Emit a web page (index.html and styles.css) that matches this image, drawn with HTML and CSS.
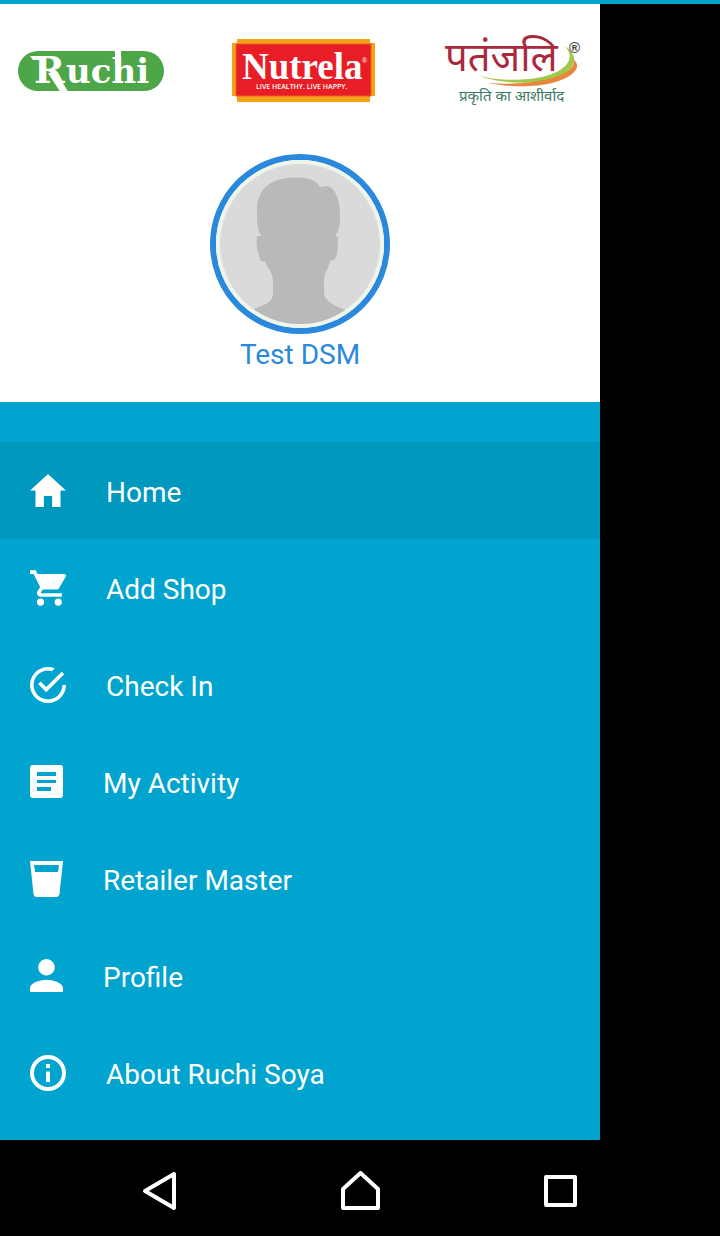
FILE: index.html
```html
<!DOCTYPE html>
<html lang="en">
<head>
<meta charset="utf-8">
<meta name="viewport" content="width=device-width, initial-scale=1">
<title>Ruchi Soya</title>
<link rel="stylesheet" href="styles.css">
</head>
<body>
<div class="screen">
  <aside class="drawer">
    <header class="profile">
      <div class="brands">
        <svg class="brand" width="146" height="70" viewBox="0 0 146 70" role="img" aria-label="Ruchi">
          <rect class="ruchi-pill" x="0" y="15" width="146" height="40" rx="20"/>
          <path class="ruchi-cut" d="M12 20h12v4H15zM30 37h9l11 18.500h-8zM97 14h6v14h-6z"/>
          <text class="ruchi-initial" x="16" y="47">R</text>
          <text class="ruchi-rest" x="48" y="47">uchi</text>
        </svg>
        <svg class="brand" width="144" height="70" viewBox="0 0 144 70" role="img" aria-label="Nutrela">
          <path class="nutrela-frame" d="M5 3h133v4h5v53h-5v6H5v-6H0V7h5z"/>
          <rect class="nutrela-panel" x="4" y="8" width="135" height="52"/>
          <text class="nutrela-name" x="10" y="43">Nutrela</text>
          <text class="nutrela-reg" x="130" y="27">®</text>
          <text class="nutrela-tag" x="24" y="53">LIVE HEALTHY. LIVE HAPPY.</text>
        </svg>
        <svg class="brand" width="138" height="70" viewBox="0 0 138 70" role="img" aria-label="Patanjali">
          <path class="swoosh-green" d="M36 40C64 47 108 45 122 29c6-7 4-13-1-19 9 6 12 14 6 22C113 50 62 50 36 40z"/>
          <path class="swoosh-orange" d="M44 47c34 3 74-3 84-16 3-4 2-7-1-9 6 3 8 8 4 13-12 15-54 19-87 12z"/>
          <text class="patanjali-name" x="1" y="35">पतंजलि</text>
          <text class="patanjali-reg" x="125" y="17">®</text>
          <text class="patanjali-tag" x="15" y="65">प्रकृति का आशीर्वाद</text>
        </svg>
      </div>
      <svg class="avatar" viewBox="0 0 180 180" role="img" aria-label="Profile picture">
        <defs><clipPath id="face"><circle cx="90" cy="90" r="80"/></clipPath></defs>
        <circle class="avatar-ring" cx="90" cy="90" r="87"/>
        <circle class="avatar-back" cx="90" cy="90" r="82"/>
        <path class="avatar-person" clip-path="url(#face)" d="M51 82C48 76 47 71 47 64V53C48 34 63 23 86 23.500c11 0 20 2 24 9.500 4-1 8-1 10 0 8 5 10 18 10 29 0 7 0 13-5 20 2 0 3 1 3 3 0 9 0 16-4 21l-4 1c-1 8-6 11-6 19v12c0 10 12 14 22 18v30H44v-31c9-4 19-5 19-17v-11c0-9-6-13-8-20-3 1-5 1-5-3-3-7-4-15-3-22z"/>
      </svg>
      <p class="user-name">Test DSM</p>
    </header>
    <nav class="menu">
      <a class="item active" href="#home" aria-current="page">
        <svg class="icon" width="36" height="33" viewBox="48 64 416 384"><path d="M208 448V320h96v128h97.600V256H464L256 64 48 256h62.400v192z"/></svg>
        <span class="label">Home</span>
      </a>
      <a class="item" href="#add-shop">
        <svg class="icon" width="36" height="36" viewBox="48 48 416 416"><path d="M169.600 377.600a41.600 41.600 0 1 0 0 83.200 41.600 41.600 0 1 0 0-83.200zM48 51.200v41.600h41.600l74.900 151.700-31.300 50.900c-3.100 5.200-5.200 12.500-5.200 19.800 0 27.900 19 41.600 44.800 41.600H416v-40H177.900c-3.100 0-5.200-2.100-5.200-5.200 0-1 2.200-5.200 2.200-5.200l20.800-32.800h154.900c15.600 0 29.100-8.300 36.400-21.800l74.900-128.800c1.200-2.500 2.100-6.200 2.100-10.400 0-11.400-9.400-19.800-20.800-19.800H135.400L115.600 51.200zM374.400 377.600a41.600 41.600 0 1 0 0 83.200 41.600 41.600 0 1 0 0-83.200z"/></svg>
        <span class="label">Add Shop</span>
      </a>
      <a class="item" href="#check-in">
        <svg class="icon" width="36" height="36" viewBox="48 48 416 416"><path d="M170.700 216.500l-29.100 29.100 93.600 93.600 208-208-29.100-29.100L235.200 279.900zM422.400 256c0 91.500-74.900 166.400-166.400 166.400S89.600 347.500 89.600 256 164.500 89.600 256 89.600c15.600 0 31.200 2.100 45.800 6.200L334 62.400C310.100 53 284.100 48 256 48 141.600 48 48 141.600 48 256s93.600 208 208 208 208-93.600 208-208z"/></svg>
        <span class="label">Check In</span>
      </a>
      <a class="item" href="#my-activity">
        <svg class="icon" width="33" height="33" viewBox="0 0 33 33"><path fill-rule="evenodd" d="M3 0h27a3 3 0 0 1 3 3v27a3 3 0 0 1-3 3H3a3 3 0 0 1-3-3V3a3 3 0 0 1 3-3zM7 7v4h19V7zM7 15v3h19v-3zM7 22v4h14v-4z"/></svg>
        <span class="label">My Activity</span>
      </a>
      <a class="item" href="#retailer-master">
        <svg class="icon" width="33" height="36" viewBox="0 0 33 36"><path fill-rule="evenodd" d="M0 0h33l-3.500 33q-.4 3-3.500 3H7q-3.100 0-3.500-3zM4 4l1 7h23l1-7z"/></svg>
        <span class="label">Retailer Master</span>
      </a>
      <a class="item" href="#profile">
        <svg class="icon" width="33" height="33" viewBox="64 64 384 384"><path d="M256 256c52.800 0 96-43.200 96-96s-43.200-96-96-96-96 43.200-96 96 43.200 96 96 96zm0 48c-63.600 0-192 32.400-192 96v48h384v-48c0-63.600-128.400-96-192-96z"/></svg>
        <span class="label">Profile</span>
      </a>
      <a class="item" href="#about">
        <svg class="icon" width="36" height="36" viewBox="0 0 36 36"><circle class="info-ring" cx="18" cy="18" r="16"/><path d="M16 9h4v4h-4zM16 16.500h4V27h-4z"/></svg>
        <span class="label">About Ruchi Soya</span>
      </a>
    </nav>
  </aside>
  <footer class="system-bar">
    <button class="system-key" type="button" aria-label="Back"><svg width="40" height="40" viewBox="0 0 40 40"><path d="M34 3v34L5 20z"/></svg></button>
    <button class="system-key" type="button" aria-label="Home"><svg width="40" height="40" viewBox="0 0 40 40"><path d="M3 18 20.500 2 38 18v19H3z"/></svg></button>
    <button class="system-key" type="button" aria-label="Recent apps"><svg width="40" height="40" viewBox="0 0 40 40"><path d="M6 6h29v28H6z"/></svg></button>
  </footer>
</div>
</body>
</html>
```

FILE: styles.css
```css
* { box-sizing: border-box; }

body {
  margin: 0;
  background: #000;
  color: #fff;
  font-family: Roboto, "Liberation Sans", sans-serif;
  font-size: 28px;
}

.screen {
  display: flex;
  flex-direction: column;
  min-height: 100vh;
  border-top: 4px solid #01a4ce;
}

.drawer {
  flex: 1;
  width: calc(100% - 120px);
  background: #01a4ce;
}

.profile {
  display: flex;
  flex-direction: column;
  align-items: center;
  padding: 32px 18px 26px;
  background: #fff;
}

.brands {
  display: flex;
  align-self: stretch;
  justify-content: space-between;
  margin-bottom: 48px;
}

.brand { display: block; overflow: visible; }

.ruchi-pill { fill: #4da749; }
.ruchi-cut { fill: #fff; }
.ruchi-initial, .ruchi-rest {
  fill: #fff;
  font-family: "DejaVu Serif", serif;
  font-weight: bold;
  font-size: 37px;
}
.ruchi-rest { font-size: 34px; }

.nutrela-frame { fill: #f5a21b; }
.nutrela-panel { fill: #e91d25; stroke: #e8601c; stroke-width: 1px; }
.nutrela-name {
  fill: #fff;
  font-family: "Liberation Serif", serif;
  font-weight: bold;
  font-size: 37px;
}
.nutrela-reg { fill: #fff; font-family: "Liberation Sans", sans-serif; font-size: 7px; }
.nutrela-tag {
  fill: #fff;
  font-family: "Open Sans", sans-serif;
  font-weight: 600;
  font-size: 7px;
}

.swoosh-green { fill: #a0c84a; }
.swoosh-orange { fill: #e8863c; }
.patanjali-name {
  fill: #a92a3c;
  font-family: "Noto Sans", "Noto Sans Devanagari", serif;
  font-size: 40px;
}
.patanjali-reg { fill: #444; font-family: "Liberation Sans", sans-serif; font-weight: bold; font-size: 15px; }
.patanjali-tag {
  fill: #3c7a64;
  font-family: "Noto Sans", "Noto Sans Devanagari", serif;
  font-style: italic;
  font-size: 15px;
}

.avatar { display: block; width: 180px; height: 180px; }
.avatar-ring { fill: #fff; stroke: #2a89dc; stroke-width: 6px; }
.avatar-back { fill: #dadada; stroke: #eff5e9; stroke-width: 4px; }
.avatar-person { fill: #b9b9b9; }

.user-name {
  margin: 0;
  color: #2a89dc;
  line-height: 42px;
}

.menu { padding-top: 40px; }

.item {
  display: flex;
  align-items: center;
  gap: 40px;
  height: 97px;
  padding: 0 30px;
  color: inherit;
  text-decoration: none;
}
.item.active { background: #0198c0; }

.icon { flex: none; fill: currentColor; }
.info-ring { fill: none; stroke: currentColor; stroke-width: 4px; }
.label { padding-top: 3px; }

.system-bar {
  display: grid;
  grid-template-columns: repeat(3, 1fr);
  height: 96px;
  padding: 6px 60px 0;
}

.system-key {
  display: grid;
  place-items: center;
  padding: 0;
  border: 0;
  background: none;
  color: #fff;
}
.system-key svg {
  fill: none;
  stroke: currentColor;
  stroke-width: 4px;
  stroke-linejoin: round;
}
```
